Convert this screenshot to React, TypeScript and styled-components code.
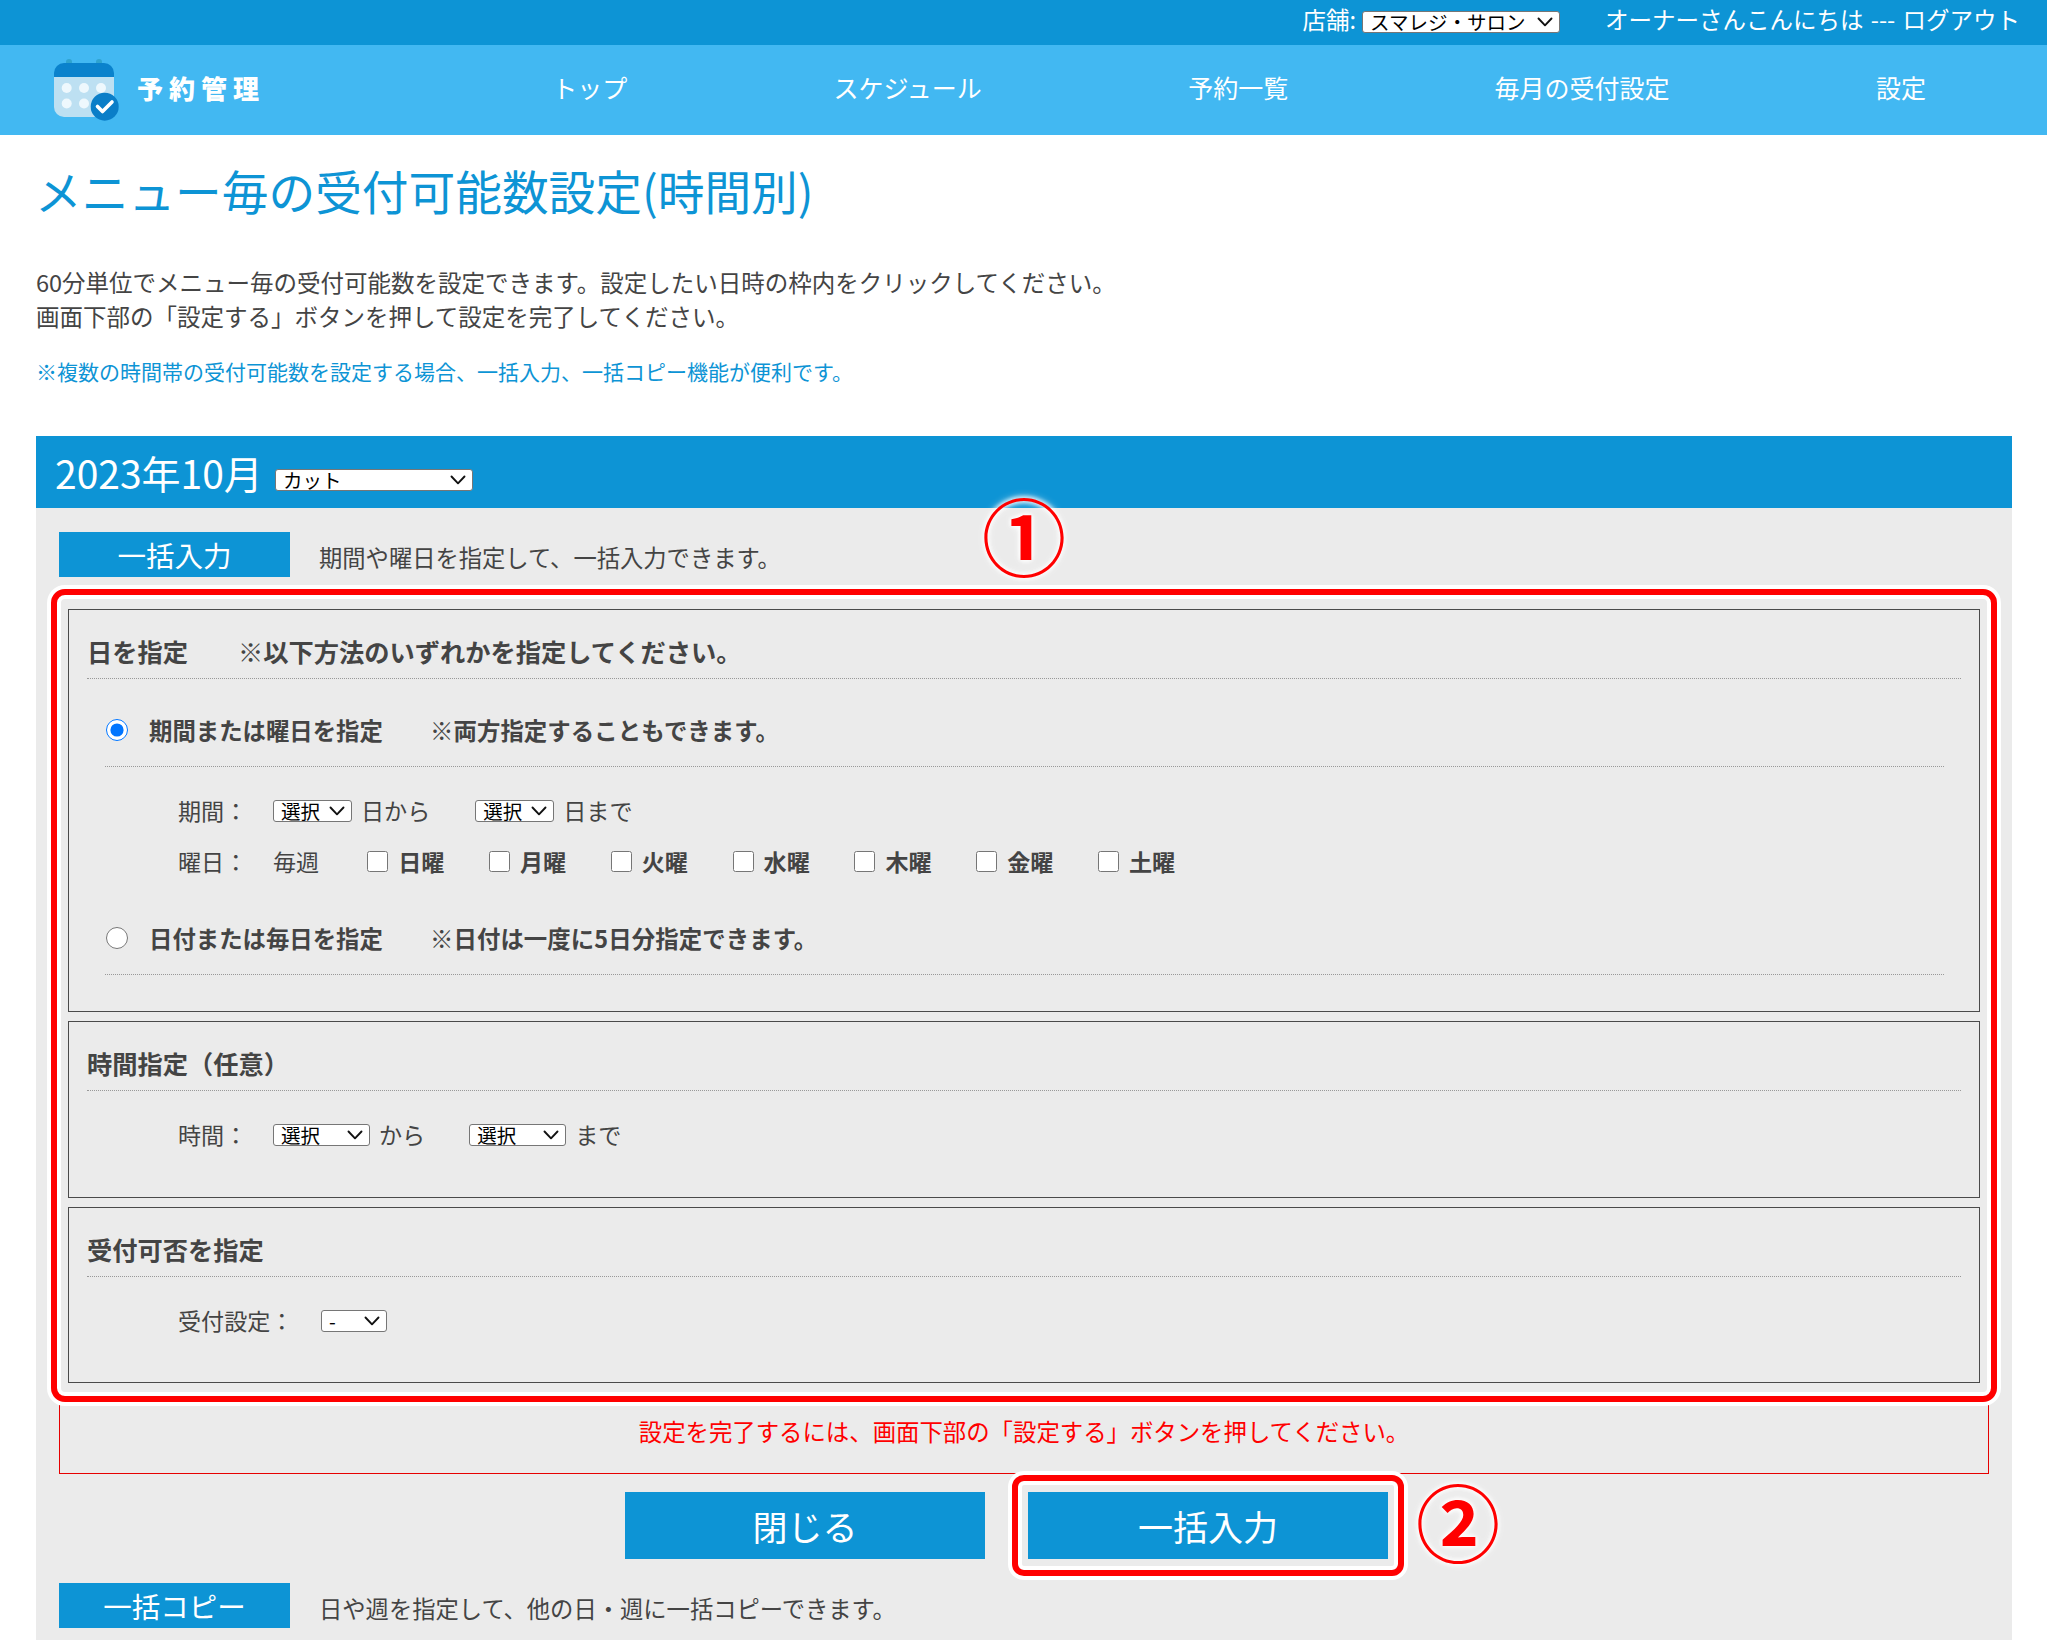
import React from "react";
import styled, { createGlobalStyle } from "styled-components";

const BLUE = "#0d94d5";
const TEXT = "#444444";
const FONT = `"Noto Sans CJK JP", "Noto Sans", sans-serif`;

const Global = createGlobalStyle`
  html, body { margin: 0; padding: 0; background: #fff; }
  body { width: 2047px; height: 1640px; overflow: hidden; font-family: ${FONT}; color: ${TEXT}; font-size: 23.5px; }
  * { box-sizing: border-box; }
`;

const TopBar = styled.div`
  height: 45px; background: ${BLUE}; color: #fff; display: flex; align-items: center; justify-content: flex-end;
  padding: 0 27px 2px 0; font-size: 23.5px; line-height: 1;
`;
const ShopLabel = styled.span`margin-right: 6px; padding-bottom: 3px;`;
const Greeting = styled.span`margin-left: 45px; padding-bottom: 3px; word-spacing: 2px;`;

const SelectBox = styled.div<{ $w: number }>`
  width: ${(p) => p.$w}px; height: 22px; font-size: 19.5px; line-height: 20px; color: #000; background: #fff;
  border: 1px solid #767676; border-radius: 3px; padding: 0 6px 0 7px; flex: none; white-space: nowrap;
  display: flex; align-items: center; justify-content: space-between;
`;
const HeadSelect = styled(SelectBox)`margin-top: 15px;`;
const Chevron = () => (
  <svg width="16" height="10" viewBox="0 0 16 10" fill="none" style={{ flex: "none" }}>
    <path d="M1.5 1.5L8 8.3l6.5-6.8" stroke="#111" strokeWidth="1.9" strokeLinecap="round" strokeLinejoin="round" />
  </svg>
);
const Select = ({ w, value }: { w: number; value: string }) => (
  <SelectBox $w={w} role="combobox"><span>{value}</span><Chevron /></SelectBox>
);

const Nav = styled.nav`height: 90px; background: #42b8f2; display: flex; align-items: center; padding-left: 50px;`;
const Logo = styled.div`display: flex; align-items: center; width: 399px; flex: none;`;
const LogoText = styled.span`color: #fff; font-size: 26px; font-weight: 900; letter-spacing: 6px; margin-left: 15px; padding-bottom: 5px;`;
const NavItem = styled.a`color: #fff; font-size: 25px; line-height: 1; padding: 0 103.2px 5px; white-space: nowrap; flex: none;`;

const Intro = styled.div`padding: 25px 36px 0;`;
const Title = styled.h1`margin: 0 0 0 -1px; color: ${BLUE}; font-size: 46.7px; font-weight: 400; line-height: 60px; white-space: nowrap;`;
const Lead = styled.p`margin: 45px 0 0; font-size: 23.5px; line-height: 34px;`;
const Hint = styled.p`margin: 23px 0 0; font-size: 21px; line-height: 30px; color: ${BLUE};`;

const Panel = styled.section`margin: 50px 35px 0 36px; position: relative;`;
const PanelHead = styled.div`height: 72px; background: ${BLUE}; color: #fff; display: flex; align-items: center; padding-left: 19px; gap: 12px;`;
const Month = styled.span`font-size: 39px; line-height: 1;`;
const Body = styled.div`background: #ebebeb; height: 1132px; position: relative;`;
const TagRow = styled.div`display: flex; margin: 0 24px 0 23px; padding-top: 24px;`;
const Tag = styled.div`
  width: 231px; height: 45px; background: ${BLUE}; color: #fff; font-size: 28.5px; display: flex; align-items: center; justify-content: center; flex: none;
`;
const TagText = styled.span`margin-left: 29px; height: 45px; font-size: 23.3px; line-height: 51px; white-space: nowrap;`;

const RedBox = styled.div`
  position: relative; z-index: 1; margin: 12px 15px 0; border: 6px solid #ff0000; border-radius: 14px; padding: 14px 11px 13px;
  display: flex; flex-direction: column; gap: 9px;
  box-shadow: 0 0 0 4px #fff, inset 0 0 0 4px #fff;
`;
const Group = styled.div<{ $h: number }>`height: ${(p) => p.$h}px; border: 1px solid #4a4a4a;`;
const GroupTitle = styled.div`
  margin: 0 18px; height: 69px; padding-top: 15px; display: flex; align-items: center; gap: 50px; font-weight: 700; font-size: 25.25px; line-height: 1.2;
  border-bottom: 1px dotted #999;
`;
const Option = styled.div`
  margin: 0 35px 0 36px; height: 88px; padding-top: 15px; display: flex; align-items: center; font-weight: 700; font-size: 23.4px; line-height: 1.2;
  border-bottom: 1px dotted #999;
`;
const Radio = styled.input.attrs({ type: "radio" })`width: 22px; height: 22px; margin: 0 21px 0 1px; flex: none;`;
const OptionNote = styled.span`margin-left: 47px; letter-spacing: 0.1px;`;
const Fields = styled.div`margin: 18px 0 0 109px;`;
const FieldRow = styled.div`height: 51px; display: flex; align-items: center; font-size: 23.1px; line-height: 1.2; white-space: nowrap;`;
const FieldLabel = styled.span<{ $w: number }>`width: ${(p) => p.$w}px; flex: none;`;
const After = styled.span<{ $gap: number }>`margin: 0 ${(p) => p.$gap}px 0 9px;`;
const DayCheck = styled.label`display: flex; align-items: center; margin-left: 48px; font-weight: 700; width: 73.8px; flex: none;`;
const Check = styled.input.attrs({ type: "checkbox" })`width: 21px; height: 21px; margin: 0 10px 0 0; flex: none;`;

const Notice = styled.div`
  margin: 0 23px; height: 72px; padding-bottom: 14px; border: 1px solid #e60000; border-top: none;
  display: flex; align-items: center; justify-content: center; color: #ff0000; font-size: 23.4px; white-space: nowrap;
`;
const Buttons = styled.div`display: flex; justify-content: center; gap: 43px; padding-right: 35px; margin-top: 18px;`;
const Button = styled.button`
  display: block; width: 360px; height: 67px; background: ${BLUE}; color: #fff; border: none; padding: 0; font-family: ${FONT}; font-size: 35px; border-radius: 0;
`;
const Marked = styled.div`
  position: relative; flex: none;
  &::after {
    content: ""; position: absolute; inset: -17px -16px; border: 6px solid #ff0000; border-radius: 12px;
    box-shadow: 0 0 0 4px #fff, inset 0 0 0 4px #fff;
  }
`;
const CircleMark = styled.span<{ $x: number; $y: number }>`
  position: absolute; z-index: 2; left: ${(p) => p.$x}px; top: ${(p) => p.$y}px; transform: translate(-50%, -50%);
  font-size: 84px; line-height: 1; color: #ff0000; font-weight: 700;
  text-shadow: 0 0 5px #fff, 0 0 5px #fff, 0 0 8px #fff;
`;

const CalendarLogo = () => (
  <svg width="72" height="70" viewBox="0 0 72 70" fill="none">
    <rect x="16" y="4" width="6" height="11" rx="3" fill="#2fa3cf" />
    <rect x="46" y="4" width="6" height="11" rx="3" fill="#2fa3cf" />
    <path d="M4 18a10 10 0 0 1 10-10h40a10 10 0 0 1 10 10v4H4z" fill="#0a82cc" />
    <path d="M4 22h60v30a10 10 0 0 1-10 10H14a10 10 0 0 1-10-10z" fill="#bde0f2" />
    {[16.7, 34, 51].map((x) => <circle key={x} cx={x} cy="33" r="5" fill="#eef8fd" />)}
    {[16.7, 34].map((x) => <circle key={x} cx={x} cy="48.5" r="5" fill="#eef8fd" />)}
    <circle cx="54.7" cy="51.7" r="14" fill="#0a7ec8" />
    <path d="M47.5 51.5l5 5 9.5-9.5" stroke="#fff" strokeWidth="3.6" strokeLinecap="round" strokeLinejoin="round" />
  </svg>
);

const days = ["日曜", "月曜", "火曜", "水曜", "木曜", "金曜", "土曜"];

export default function App() {
  return (
    <>
      <Global />
      <TopBar>
        <ShopLabel>店舗:</ShopLabel>
        <Select w={198} value="スマレジ・サロン" />
        <Greeting>オーナーさんこんにちは --- ログアウト</Greeting>
      </TopBar>
      <Nav>
        <Logo>
          <CalendarLogo />
          <LogoText>予約管理</LogoText>
        </Logo>
        <NavItem>トップ</NavItem>
        <NavItem>スケジュール</NavItem>
        <NavItem>予約一覧</NavItem>
        <NavItem>毎月の受付設定</NavItem>
        <NavItem>設定</NavItem>
      </Nav>
      <Intro>
        <Title>メニュー毎の受付可能数設定(時間別)</Title>
        <Lead>
          60分単位でメニュー毎の受付可能数を設定できます。設定したい日時の枠内をクリックしてください。<br />
          画面下部の「設定する」ボタンを押して設定を完了してください。
        </Lead>
        <Hint>※複数の時間帯の受付可能数を設定する場合、一括入力、一括コピー機能が便利です。</Hint>
      </Intro>
      <Panel>
        <PanelHead>
          <Month>2023年10月</Month>
          <HeadSelect $w={198} role="combobox"><span>カット</span><Chevron /></HeadSelect>
        </PanelHead>
        <Body>
          <CircleMark $x={988} $y={26}>①</CircleMark>
          <TagRow>
            <Tag>一括入力</Tag>
            <TagText>期間や曜日を指定して、一括入力できます。</TagText>
          </TagRow>
          <RedBox>
            <Group $h={403}>
              <GroupTitle><span>日を指定</span><span>※以下方法のいずれかを指定してください。</span></GroupTitle>
              <Option>
                <Radio name="mode" defaultChecked />
                <span>期間または曜日を指定</span>
                <OptionNote>※両方指定することもできます。</OptionNote>
              </Option>
              <Fields>
                <FieldRow>
                  <FieldLabel $w={95}>期間：</FieldLabel>
                  <Select w={79} value="選択" />
                  <After $gap={45}>日から</After>
                  <Select w={79} value="選択" />
                  <After $gap={0}>日まで</After>
                </FieldRow>
                <FieldRow>
                  <FieldLabel $w={95}>曜日：</FieldLabel>
                  <span>毎週</span>
                  {days.map((d) => (
                    <DayCheck key={d}><Check />{d}</DayCheck>
                  ))}
                </FieldRow>
              </Fields>
              <Option>
                <Radio name="mode" />
                <span>日付または毎日を指定</span>
                <OptionNote>※日付は一度に5日分指定できます。</OptionNote>
              </Option>
            </Group>
            <Group $h={177}>
              <GroupTitle>時間指定（任意）</GroupTitle>
              <Fields>
                <FieldRow>
                  <FieldLabel $w={95}>時間：</FieldLabel>
                  <Select w={97} value="選択" />
                  <After $gap={44}>から</After>
                  <Select w={97} value="選択" />
                  <After $gap={0}>まで</After>
                </FieldRow>
              </Fields>
            </Group>
            <Group $h={176}>
              <GroupTitle>受付可否を指定</GroupTitle>
              <Fields>
                <FieldRow>
                  <FieldLabel $w={143}>受付設定：</FieldLabel>
                  <Select w={66} value="-" />
                </FieldRow>
              </Fields>
            </Group>
          </RedBox>
          <Notice>設定を完了するには、画面下部の「設定する」ボタンを押してください。</Notice>
          <Buttons>
            <Button>閉じる</Button>
            <Marked><Button>一括入力</Button></Marked>
          </Buttons>
          <CircleMark $x={1422} $y={1012}>②</CircleMark>
          <TagRow>
            <Tag>一括コピー</Tag>
            <TagText>日や週を指定して、他の日・週に一括コピーできます。</TagText>
          </TagRow>
        </Body>
      </Panel>
    </>
  );
}
